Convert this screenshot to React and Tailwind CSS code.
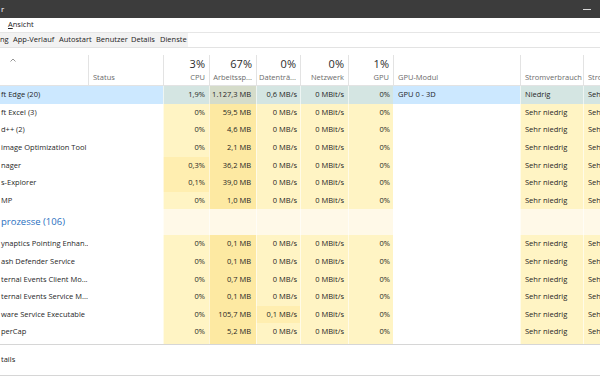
const DEFAULTS = {
  cpu: '0%',
  disk: '0 MB/s',
  net: '0 MBit/s',
  gpu: '0%',
  engine: '',
  power: 'Sehr niedrig',
  trend: 'Sehr niedrig',
}

const APPS = [
  { name: 'ft Edge (20)', cpu: '1,9%', mem: '1.127,3 MB', disk: '0,6 MB/s', engine: 'GPU 0 - 3D', power: 'Niedrig', selected: true },
  { name: 'ft Excel (3)', mem: '59,5 MB' },
  { name: 'd++ (2)', mem: '4,6 MB' },
  { name: 'image Optimization Tool', mem: '2,1 MB' },
  { name: 'nager', cpu: '0,3%', mem: '36,2 MB', cpuHot: true },
  { name: 's-Explorer', cpu: '0,1%', mem: '39,0 MB', cpuHot: true },
  { name: 'MP', mem: '1,0 MB' },
]

const BACKGROUND = [
  { name: 'ynaptics Pointing Enhan...', mem: '0,1 MB' },
  { name: 'ash Defender Service', mem: '0,1 MB' },
  { name: 'ternal Events Client Mo...', mem: '0,7 MB' },
  { name: 'ternal Events Service M...', mem: '0,1 MB' },
  { name: 'ware Service Executable', mem: '105,7 MB', disk: '0,1 MB/s', diskHot: true },
  { name: 'perCap', mem: '5,2 MB' },
]

const TABS = [
  { label: 'ng', w: 'w-[11px]' },
  { label: 'App-Verlauf', w: 'w-[46px]' },
  { label: 'Autostart', w: 'w-[37px]' },
  { label: 'Benutzer', w: 'w-[35px]' },
  { label: 'Details', w: 'w-[29px]' },
  { label: 'Dienste', w: 'w-[30px]' },
]

function heat(selected, level) {
  if (selected) return level === 2 ? 'bg-[#d5dcca]' : 'bg-[#d4e5e2]'
  if (level === 2) return 'bg-[#fde9a2]'
  if (level === 1) return 'bg-[#ffeeb0]'
  return 'bg-[#fff4c4]'
}

function NumCell({ w, bg, children, pr = 'pr-[4px]' }) {
  return (
    <div className={`${w} ${bg} ${pr} h-full shrink-0 flex items-center justify-end border-l border-white/60 whitespace-nowrap`}>
      {children}
    </div>
  )
}

function Row({ r }) {
  const d = { ...DEFAULTS, ...r }
  const sel = !!d.selected
  const plain = sel ? 'bg-[#cce8ff]' : 'bg-white'
  return (
    <div className="flex h-[17.65px] text-[7.5px] text-[#1f1f1f]">
      <div className={`w-[88px] ${plain} h-full shrink-0 flex items-center pl-[1px] whitespace-nowrap overflow-hidden`}>{d.name}</div>
      <div className={`w-[75px] ${plain} h-full shrink-0`} />
      <NumCell w="w-[46px]" bg={heat(sel, d.cpuHot ? 1 : 0)}>{d.cpu}</NumCell>
      <NumCell w="w-[47px]" bg={heat(sel, 2)} pr="pr-[5px]">{d.mem}</NumCell>
      <NumCell w="w-[44px]" bg={heat(sel, d.diskHot ? 1 : 0)} pr="pr-[3px]">{d.disk}</NumCell>
      <NumCell w="w-[48px]" bg={heat(sel, 0)}>{d.net}</NumCell>
      <NumCell w="w-[45px]" bg={heat(sel, 0)} pr="pr-[3px]">{d.gpu}</NumCell>
      <div className={`w-[127px] ${plain} h-full shrink-0 flex items-center pl-[5px] whitespace-nowrap`}>{d.engine}</div>
      <div className={`w-[63px] ${heat(sel, 0)} h-full shrink-0 flex items-center pl-[4px] border-l border-white/60 whitespace-nowrap`}>{d.power}</div>
      <div className={`w-[77px] ${heat(sel, 0)} h-full shrink-0 flex items-center pl-[4px] border-l border-white/60 whitespace-nowrap`}>{d.trend}</div>
    </div>
  )
}

function Filler({ h, light }) {
  const y = light ? 'bg-[#fff9e8]' : 'bg-[#fff4c4]'
  const m = light ? 'bg-[#fff9e8]' : 'bg-[#fde9a2]'
  return (
    <div className={`flex ${h}`}>
      <div className="w-[163px] shrink-0 bg-white" />
      <div className={`w-[46px] shrink-0 ${y} border-l border-white/60`} />
      <div className={`w-[47px] shrink-0 ${m} border-l border-white/60`} />
      <div className={`w-[44px] shrink-0 ${y} border-l border-white/60`} />
      <div className={`w-[48px] shrink-0 ${y} border-l border-white/60`} />
      <div className={`w-[45px] shrink-0 ${y} border-l border-white/60`} />
      <div className="w-[127px] shrink-0 bg-white" />
      <div className={`w-[63px] shrink-0 ${y} border-l border-white/60`} />
      <div className={`w-[77px] shrink-0 ${y} border-l border-white/60`} />
    </div>
  )
}

function HeadCell({ w, pct, label, left }) {
  return (
    <div className={`${w} shrink-0 h-full pt-[7px]`}>
      <div className={`h-full border-l border-[#e3e3e3] flex flex-col ${left ? 'items-start pl-[4px]' : 'items-end pr-[4px]'}`}>
        <div className="h-[13px] mt-[2px] text-[11px] leading-[13px] text-[#2b2b2b]">{pct}</div>
        <div className="mt-[2px] text-[7.5px] leading-[10px] text-[#6b6b6b] whitespace-nowrap">{label}</div>
      </div>
    </div>
  )
}

export default function App() {
  return (
    <div className="w-[600px] h-[380px] overflow-hidden bg-white font-['Open_Sans','Noto_Sans',sans-serif]">
      {/* title bar */}
      <div className="h-[18px] bg-[#3c3c3c] flex items-center justify-between">
        <span className="pl-[1px] text-[8px] text-white">r</span>
        <div className="w-[8px] h-[1px] bg-[#d8d8d8] mr-[9px]" />
      </div>

      {/* menu */}
      <div className="h-[15px] border-b border-[#e6e6e6] flex items-center pl-[8px] text-[7.5px] text-[#222]">
        <span><span className="underline">A</span>nsicht</span>
      </div>

      {/* tabs */}
      <div className="h-[15px] border-b border-[#e3e3e3] flex text-[7.5px] text-[#222]">
        {TABS.map((t, i) => (
          <div key={t.label} className={`${t.w} h-full bg-[#f2f2f2] flex items-center whitespace-nowrap ${i === 0 ? '' : 'pl-[2px]'}`}>
            {t.label}
          </div>
        ))}
      </div>

      {/* column header */}
      <div className="h-[38px] border-b border-[#e3e3e3] flex w-[660px]">
        <div className="w-[88px] shrink-0 pt-[10px] pl-[10px]">
          <svg width="6" height="4" viewBox="0 0 6 4">
            <polyline points="0.5,3.5 3,1 5.5,3.5" fill="none" stroke="#8a8a8a" strokeWidth="0.9" />
          </svg>
        </div>
        <HeadCell w="w-[75px]" label="Status" left />
        <HeadCell w="w-[46px]" pct="3%" label="CPU" />
        <HeadCell w="w-[47px]" pct="67%" label="Arbeitssp..." />
        <HeadCell w="w-[44px]" pct="0%" label="Datenträ..." />
        <HeadCell w="w-[48px]" pct="0%" label="Netzwerk" />
        <HeadCell w="w-[45px]" pct="1%" label="GPU" />
        <HeadCell w="w-[127px]" label="GPU-Modul" left />
        <HeadCell w="w-[63px]" label="Stromverbrauch" left />
        <HeadCell w="w-[77px]" label="Stromverbrauch (Trend)" left />
      </div>

      {/* process list */}
      <div className="h-[258px] w-[660px] flex flex-col">
        {APPS.map(r => <Row key={r.name} r={r} />)}
        <div className="relative">
          <Filler h="h-[25.6px]" light />
          <div className="absolute inset-y-0 left-0 flex items-center pl-[1px] text-[9.5px] text-[#2a6fc0]">prozesse (106)</div>
        </div>
        {BACKGROUND.map(r => <Row key={r.name} r={r} />)}
        <div className="flex-1 flex flex-col">
          <Filler h="h-full" />
        </div>
      </div>

      {/* footer */}
      <div className="h-[32px] border-y border-[#d6d6d6] flex items-center pl-[1px] text-[7.5px] text-[#222]">
        tails
      </div>
    </div>
  )
}
